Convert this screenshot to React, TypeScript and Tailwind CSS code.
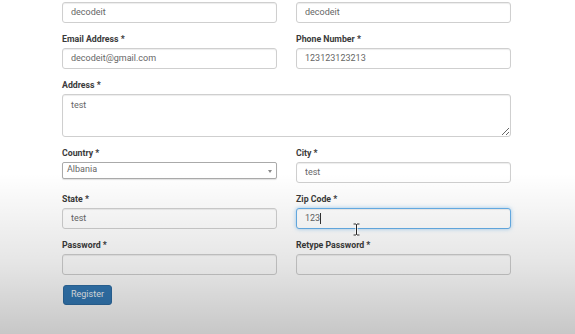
import React from "react";

const inputCls =
  "block h-[21px] w-full rounded-[3px] border border-[#cfcfcf] bg-white px-[8px] text-[9px] text-[#666] shadow-[inset_0_1px_1px_rgba(0,0,0,0.075)] outline-none";

function Label({ children }: { children: React.ReactNode }) {
  return (
    <label className="mb-[3px] block text-[8.75px] font-bold leading-[11px] text-[#3a3a3a]">
      {children}
    </label>
  );
}

function Field({
  label,
  value,
  type = "text",
}: {
  label: string;
  value?: string;
  type?: string;
}) {
  return (
    <div className="mb-[11px]">
      <Label>{label}</Label>
      <input type={type} className={inputCls} defaultValue={value} readOnly />
    </div>
  );
}

export default function App() {
  return (
    <div className="relative h-[334px] w-[575px] overflow-hidden bg-white font-['Roboto','Liberation_Sans',sans-serif]">
      <div className="ml-[62px] w-[449px] pt-[1.5px]">
        {/* top row, labels scrolled out of view */}
        <div className="grid grid-cols-2 gap-x-[19px]">
          <div className="mb-[11px]">
            <input className={inputCls} defaultValue="decodeit" readOnly />
          </div>
          <div className="mb-[11px]">
            <input className={inputCls} defaultValue="decodeit" readOnly />
          </div>

          <Field label="Email Address *" value="decodeit@gmail.com" />
          <Field label="Phone Number *" value="123123123213" />
        </div>

        <div className="mb-[11px]">
          <Label>Address *</Label>
          <textarea
            className="block h-[43px] w-full rounded-[3px] border border-[#cfcfcf] bg-white px-[8px] py-[4px] text-[9px] leading-[12px] text-[#666] shadow-[inset_0_1px_1px_rgba(0,0,0,0.075)] outline-none"
            defaultValue="test"
            readOnly
          />
        </div>

        <div className="grid grid-cols-2 gap-x-[19px]">
          {/* Country */}
          <div className="mb-[11px]">
            <Label>Country *</Label>
            <div className="relative flex h-[17px] items-center rounded-[2px] border border-[#aaa] bg-white pl-[4px] text-[9px] text-[#666] shadow-[0_1px_1px_rgba(0,0,0,0.12)]">
              <span>Albania</span>
              <span className="absolute right-[4px] top-[7px] h-0 w-0 border-x-[2.5px] border-t-[3px] border-x-transparent border-t-[#888]" />
            </div>
          </div>
          <Field label="City *" value="test" />

          <Field label="State *" value="test" />
          {/* Zip code, focused */}
          <div className="mb-[11px]">
            <Label>Zip Code *</Label>
            <div className="relative">
              <input
                className="block h-[21px] w-full rounded-[3px] border border-[#66afe9] bg-white px-[8px] text-[9px] text-[#666] shadow-[inset_0_1px_1px_rgba(0,0,0,0.075),0_0_4px_rgba(102,175,233,0.6)] outline-none"
                defaultValue="123"
                readOnly
              />
              <span className="absolute left-[23.5px] top-[5px] h-[11px] w-px bg-[#333]" />
            </div>
          </div>

          <div className="mb-[10px]">
            <Label>Password *</Label>
            <input type="password" className={inputCls} readOnly />
          </div>
          <div className="mb-[10px]">
            <Label>Retype Password *</Label>
            <input type="password" className={inputCls} readOnly />
          </div>
        </div>

        <button className="ml-[1px] flex h-[20px] items-center rounded-[3px] border border-[#2e6da4] bg-[#337ab7] px-[7px] text-[9px] text-[#f2f6fa]">
          Register
        </button>
      </div>

      {/* video vignette */}
      <div className="pointer-events-none absolute inset-0 bg-[linear-gradient(to_bottom,rgba(0,0,0,0)_0%,rgba(0,0,0,0)_52%,rgba(0,0,0,0.03)_60%,rgba(0,0,0,0.1)_79%,rgba(0,0,0,0.22)_100%)]" />

      {/* mouse I-beam */}
      <svg
        className="pointer-events-none absolute left-[352px] top-[223px]"
        width="9"
        height="13"
        viewBox="0 0 9 13"
      >
        <path
          d="M1.5 1h2.5l.5.5.5-.5h2.5M4.5 1.5v10M1.5 12h2.5l.5-.5.5.5h2.5"
          fill="none"
          stroke="#fff"
          strokeWidth="2.2"
        />
        <path
          d="M1.5 1h2.5l.5.5.5-.5h2.5M4.5 1.5v10M1.5 12h2.5l.5-.5.5.5h2.5"
          fill="none"
          stroke="#222"
          strokeWidth="1"
        />
      </svg>
    </div>
  );
}
